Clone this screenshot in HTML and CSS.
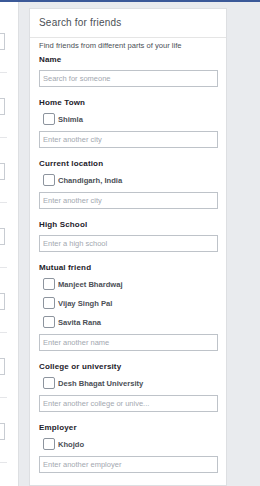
FILE: index.html
```html
<!DOCTYPE html>
<html lang="en">

<head>
    <meta charset="UTF-8">
    <meta name="viewport" content="width=device-width, initial-scale=1.0">
    <title>Search for friends</title>
    <link rel="stylesheet" href="styles.css">
</head>

<body>

    <div class="topbar"></div>

    <div class="page">
        <!-- edge of the previous column -->
        <div class="side">
            <div class="stub"></div>
            <div class="rule"></div>
            <div class="stub"></div>
            <div class="rule"></div>
            <div class="stub"></div>
            <div class="rule"></div>
            <div class="stub"></div>
            <div class="rule"></div>
            <div class="stub"></div>
            <div class="rule"></div>
            <div class="stub"></div>
            <div class="rule"></div>
            <div class="stub"></div>
            <div class="rule"></div>
            <div class="stub"></div>
        </div>

        <div class="panel">
            <div class="panel-head">Search for friends</div>

            <div class="panel-body">
                <p class="intro">Find friends from different parts of your life</p>

                <div class="field first">
                    <div class="field-label">Name</div>
                    <input type="text" class="text-input" placeholder="Search for someone">
                </div>

                <div class="field">
                    <div class="field-label">Home Town</div>
                    <label class="check-row"><input type="checkbox"><span>Shimla</span></label>
                    <input type="text" class="text-input" placeholder="Enter another city">
                </div>

                <div class="field">
                    <div class="field-label">Current location</div>
                    <label class="check-row"><input type="checkbox"><span>Chandigarh, India</span></label>
                    <input type="text" class="text-input" placeholder="Enter another city">
                </div>

                <div class="field">
                    <div class="field-label">High School</div>
                    <input type="text" class="text-input" placeholder="Enter a high school">
                </div>

                <div class="field">
                    <div class="field-label">Mutual friend</div>
                    <label class="check-row"><input type="checkbox"><span>Manjeet Bhardwaj</span></label>
                    <label class="check-row"><input type="checkbox"><span>Vijay Singh Pal</span></label>
                    <label class="check-row"><input type="checkbox"><span>Savita Rana</span></label>
                    <input type="text" class="text-input" placeholder="Enter another name">
                </div>

                <div class="field">
                    <div class="field-label">College or university</div>
                    <label class="check-row"><input type="checkbox"><span>Desh Bhagat University</span></label>
                    <input type="text" class="text-input" placeholder="Enter another college or unive...">
                </div>

                <div class="field">
                    <div class="field-label">Employer</div>
                    <label class="check-row"><input type="checkbox"><span>Khojdo</span></label>
                    <input type="text" class="text-input" placeholder="Enter another employer">
                </div>
            </div>
        </div>
    </div>

</body>

</html>
```

FILE: styles.css
```css
body {
    margin: 0;
    width: 260px;
    height: 486px;
    overflow: hidden;
    background-color: #e9ebee;
    font-family: "Liberation Sans", Arial, sans-serif;
}

.topbar {
    height: 2px;
    background-color: #3b5998;
}

.page {
    display: flex;
    align-items: flex-start;
}

/* cut-off column on the left */
.side {
    width: 19px;
    height: 484px;
    box-sizing: border-box;
    padding-top: 31px;
    background-color: #fff;
    border-right: 1px solid #dddfe2;
    overflow: hidden;
}

.stub {
    width: 5px;
    height: 17px;
    box-sizing: border-box;
    border: 1px solid #c8ccd2;
    border-left: none;
    margin-bottom: 22px;
}

.rule {
    width: 7px;
    height: 1px;
    background-color: #e5e6e9;
    margin-bottom: 25px;
}

.panel {
    width: 198px;
    box-sizing: border-box;
    margin: 6px 0 0 10px;
    padding-bottom: 12px;
    background-color: #fff;
    border: 1px solid #dddfe2;
}

.panel-head {
    height: 28px;
    line-height: 28px;
    padding-left: 9px;
    font-size: 10px;
    letter-spacing: 0.2px;
    color: #4b4f56;
    border-bottom: 1px solid #e5e5e5;
}

.panel-body {
    padding: 0 8px 0 9px;
}

.intro {
    margin: 1px 0 0;
    line-height: 14px;
    font-size: 7.6px;
    color: #4b4f56;
}

.field {
    margin-top: 9px;
}

.field.first {
    margin-top: 0;
}

.field-label {
    line-height: 14px;
    font-size: 8px;
    font-weight: bold;
    letter-spacing: 0.15px;
    color: #1d2129;
}

.check-row {
    display: flex;
    align-items: center;
    gap: 3px;
    height: 18px;
    padding-left: 4px;
    font-size: 7.6px;
    font-weight: bold;
    color: #4b4f56;
}

.check-row + .check-row {
    margin-top: 1px;
}

.check-row input {
    appearance: none;
    -webkit-appearance: none;
    width: 12px;
    height: 12px;
    margin: 0;
    box-sizing: border-box;
    border: 1px solid #8d949e;
    border-radius: 2px;
    background-color: #fff;
}

.text-input {
    display: block;
    width: 100%;
    height: 17px;
    margin: 3px 0 0;
    padding: 0 3px;
    box-sizing: border-box;
    border: 1px solid #bec3c9;
    border-radius: 0;
    outline: none;
    font-family: "Liberation Sans", Arial, sans-serif;
    font-size: 7.5px;
    color: #1d2129;
}

.text-input::placeholder {
    color: #a3a8b0;
}
```
